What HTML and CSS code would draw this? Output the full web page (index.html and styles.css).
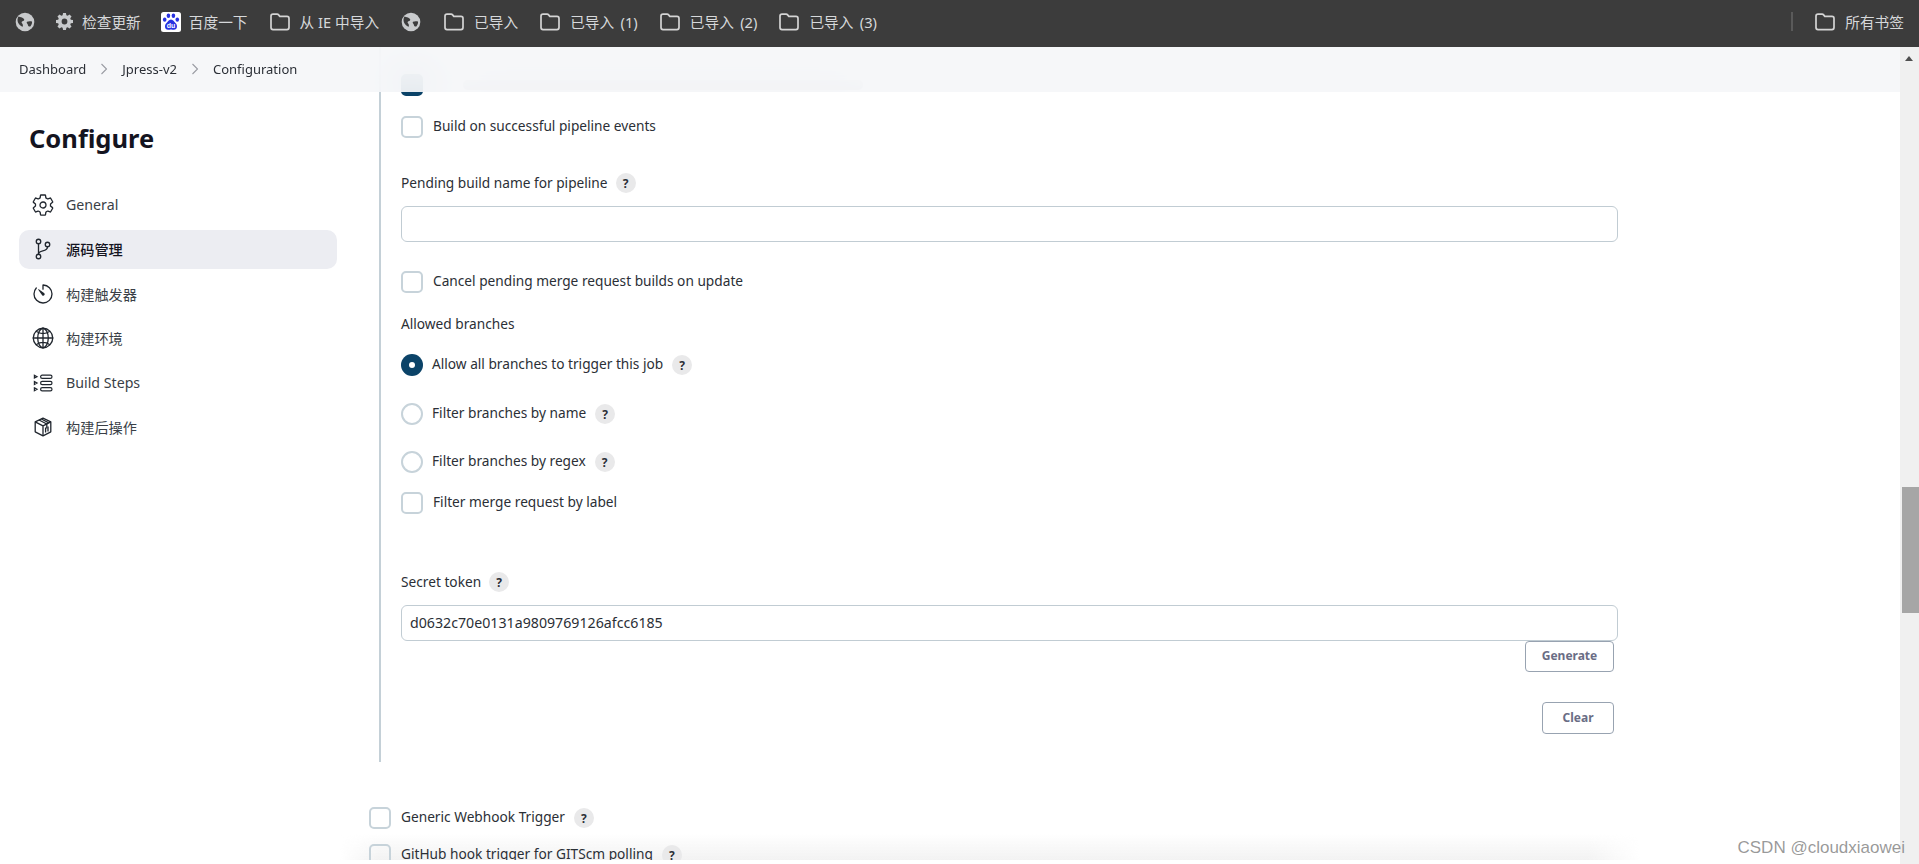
FILE: index.html
```html
<!DOCTYPE html>
<html lang="zh-CN">
<head>
<meta charset="utf-8">
<title>Jpress-v2 Config</title>
<link rel="stylesheet" href="styles.css">
</head>
<body>
<svg class="defs" width="0" height="0" aria-hidden="true">
  <symbol id="folder" viewBox="0 0 20 18"><path d="M1 3.2C1 2 1.8 1.2 3 1.2h4.2c.6 0 1 .2 1.4.7l1.2 1.5h7.2c1.2 0 2 .8 2 2v9.2c0 1.2-.8 2-2 2H3c-1.200 0-2-.8-2-2z" fill="none" stroke="currentColor" stroke-width="1.700"/></symbol>
  <symbol id="earth" viewBox="0 0 20 20"><circle cx="10" cy="10" r="9.300" fill="#c8cacc"/><path d="M3.500 4.500c2 .5 3.500 1 5 2 1.300.9.800 2.300-.5 2.600-1.500.4-1.800 1.500-.8 2.400.8.800.8 2 .6 3.200-1.800-.5-3.800-2-4.800-4.200-.8-2-.6-4.300.5-6zM12 9.800c1.500-.8 3.200-.8 5-.3.300 1.700-.4 3.600-1.700 5-.8.200-1.400.1-2-.6-.6-.8-.3-1.500-1-2.200-.5-.6-.9-1.300-.3-1.900z" fill="#3c3c3c"/></symbol>
</svg>

<header class="toolbar">
  <svg class="tb-icon earth first"><use href="#earth"/></svg>
  <span class="tb-item tb-check">
    <svg class="tb-gear" viewBox="0 0 20 20"><path fill-rule="evenodd" d="M8.300 0h3.400l.5 2.600 1.500.6 2.200-1.500 2.400 2.400-1.500 2.200.6 1.500 2.600.5v3.400l-2.600.5-.6 1.500 1.500 2.200-2.400 2.400-2.200-1.500-1.500.6-.5 2.600H8.300l-.5-2.600-1.500-.6-2.200 1.500-2.400-2.400 1.500-2.200-.6-1.500L0 11.700V8.300l2.600-.5.6-1.500-1.500-2.200 2.400-2.400 2.200 1.500 1.500-.6zM10 6.600a3.400 3.400 0 100 6.800 3.400 3.400 0 000-6.800z" fill="#c8cacc"/></svg>
    <span>检查更新</span>
  </span>
  <span class="tb-item">
    <svg class="tb-baidu" viewBox="0 0 20 20"><rect width="20" height="20" rx="2.500" fill="#fff"/><g fill="#2932e1"><ellipse cx="7.400" cy="3.800" rx="1.800" ry="2.300"/><ellipse cx="12.400" cy="3.800" rx="1.800" ry="2.300"/><ellipse cx="3.700" cy="7.600" rx="1.800" ry="2.200"/><ellipse cx="16.300" cy="7.600" rx="1.800" ry="2.200"/><path d="M10 7.500c-2.200 0-3 2.300-4.700 3.800-2 1.700-1.800 6.500 1.800 6.500 1.200 0 1.800-.3 2.900-.3s1.700.3 2.900.3c3.600 0 3.800-4.800 1.800-6.500C13 9.800 12.200 7.500 10 7.500z"/></g><text class="du" x="10" y="16.200" text-anchor="middle">du</text></svg>
    <span>百度一下</span>
  </span>
  <span class="tb-item"><svg class="tb-folder"><use href="#folder"/></svg><span>从 IE 中导入</span></span>
  <svg class="tb-icon earth"><use href="#earth"/></svg>
  <span class="tb-item"><svg class="tb-folder"><use href="#folder"/></svg><span>已导入</span></span>
  <span class="tb-item tb-num"><svg class="tb-folder"><use href="#folder"/></svg><span>已导入 (1)</span></span>
  <span class="tb-item tb-num"><svg class="tb-folder"><use href="#folder"/></svg><span>已导入 (2)</span></span>
  <span class="tb-item tb-num"><svg class="tb-folder"><use href="#folder"/></svg><span>已导入 (3)</span></span>
  <span class="tb-sep"></span>
  <span class="tb-item tb-all"><svg class="tb-folder"><use href="#folder"/></svg><span>所有书签</span></span>
</header>

<div class="view">
  <div class="pane">
    <nav class="crumbs">
      <span>Dashboard</span>
      <svg class="chev" viewBox="0 0 8 12"><path d="M1.500 1l5 5-5 5" fill="none" stroke="#9a9ca3" stroke-width="1.100"/></svg>
      <span>Jpress-v2</span>
      <svg class="chev" viewBox="0 0 8 12"><path d="M1.500 1l5 5-5 5" fill="none" stroke="#9a9ca3" stroke-width="1.100"/></svg>
      <span>Configuration</span>
    </nav>

    <aside class="side">
      <h1 class="side-title">Configure</h1>
      <ul class="side-list">
        <li class="side-item">
          <svg class="side-icon" viewBox="0 0 512 512"><path class="ln" d="M262.290 192.310a64 64 0 1057.400 57.400 64.130 64.130 0 00-57.400-57.400zM416.390 256a154.340 154.340 0 01-1.530 20.790l45.210 35.460a10.810 10.810 0 012.450 13.750l-42.770 74a10.810 10.810 0 01-13.140 4.590l-44.900-18.080a16.110 16.110 0 00-15.170 1.750A164.480 164.480 0 01325 400.800a15.940 15.940 0 00-8.820 12.140l-6.730 47.890a11.080 11.080 0 01-10.680 9.170h-85.540a11.110 11.110 0 01-10.690-8.870l-6.720-47.820a16.070 16.070 0 00-9-12.220 155.300 155.300 0 01-21.460-12.570 16 16 0 00-15.110-1.710l-44.890 18.070a10.810 10.810 0 01-13.140-4.580l-42.770-74a10.800 10.800 0 012.450-13.750l38.210-30a16.050 16.050 0 006.070-14.080c-.36-4.170-.58-8.330-.58-12.500s.21-8.270.58-12.350a16 16 0 00-6.070-13.940l-38.190-30A10.810 10.810 0 0149.480 186l42.770-74a10.810 10.810 0 0113.140-4.590l44.900 18.080a16.110 16.110 0 0015.170-1.750A164.480 164.480 0 01187 111.200a15.940 15.940 0 008.820-12.140l6.730-47.890A11.080 11.080 0 01213.230 42h85.540a11.110 11.110 0 0110.690 8.870l6.720 47.820a16.070 16.070 0 009 12.220 155.300 155.300 0 0121.460 12.570 16 16 0 0015.110 1.710l44.890-18.070a10.810 10.810 0 0113.140 4.580l42.770 74a10.800 10.800 0 01-2.450 13.750l-38.210 30a16.050 16.050 0 00-6.070 14.080c.33 4.140.55 8.300.55 12.470z"/></svg>
          <span>General</span>
        </li>
        <li class="side-item is-active">
          <svg class="side-icon" viewBox="0 0 512 512"><circle class="ln" cx="160" cy="96" r="48"/><circle class="ln" cx="160" cy="416" r="48"/><path class="ln" d="M160 368V144"/><circle class="ln" cx="352" cy="160" r="48"/><path class="ln" d="M352 208c0 128-192 48-192 160"/></svg>
          <span>源码管理</span>
        </li>
        <li class="side-item">
          <svg class="side-icon" viewBox="0 0 512 512"><path class="ln" d="M112.910 128A191.850 191.850 0 0064 254c-1.180 106.350 85.650 193.800 192 194 106.200.2 192-85.830 192-192 0-104.540-83.550-189.610-187.500-192a4.360 4.360 0 00-4.500 4.370V152"/><path class="fl" d="M233.380 278.630l-79-113a8.130 8.130 0 0111.320-11.320l113 79a32.500 32.500 0 01-37.250 53.260 33.210 33.210 0 01-8.070-7.940z"/></svg>
          <span>构建触发器</span>
        </li>
        <li class="side-item">
          <svg class="side-icon" viewBox="0 0 512 512"><path class="ln" d="M256 48C141.130 48 48 141.130 48 256s93.130 208 208 208 208-93.130 208-208S370.870 48 256 48z"/><path class="ln" d="M256 48c-58.070 0-112.670 93.130-112.670 208S197.930 464 256 464s112.670-93.130 112.670-208S314.070 48 256 48z"/><path class="ln" d="M117.330 117.330c38.240 27.150 86.380 43.340 138.670 43.340s100.430-16.190 138.670-43.340M394.670 394.670c-38.240-27.150-86.380-43.340-138.670-43.340s-100.430 16.190-138.670 43.340M256 48v416M464 256H48"/></svg>
          <span>构建环境</span>
        </li>
        <li class="side-item">
          <svg class="side-icon" viewBox="-2 -2 24 24"><g fill="none" stroke="#20262e" stroke-width="1.200"><rect x="7.600" y="2.100" width="11.400" height="3.200" rx="1.600"/><rect x="7.600" y="8.400" width="11.400" height="3.200" rx="1.600"/><rect x="7.600" y="14.700" width="11.400" height="3.200" rx="1.600"/><path d="M1.400 2.300l2.600 1.400-2.600 1.400zM1.400 8.600L4 10l-2.600 1.400zM1.400 14.900L4 16.300l-2.600 1.400z"/></g></svg>
          <span>Build Steps</span>
        </li>
        <li class="side-item">
          <svg class="side-icon" viewBox="-2 -2 24 24"><g fill="none" stroke="#20262e" stroke-width="1.300" stroke-linejoin="round"><path d="M10 1.200l7.800 3.600v10L10 18.800l-7.800-4v-10z"/><path d="M2.200 4.800L10 8.800l7.800-4M10 8.800v10"/><path d="M6 3l7.800 4v4.600M8.400 2l7.400 3.800"/><path d="M12.600 10.500v5M15 9.400v5"/></g></svg>
          <span>构建后操作</span>
        </li>
      </ul>
    </aside>

    <main class="main">
      <section class="panel">
        <span class="ghost-row" aria-hidden="true"><span class="box is-checked"></span><span class="ghost-text"></span></span>
        <label class="row row-build"><span class="box"></span><span>Build on successful pipeline events</span></label>

        <div class="field-label label-pending"><span>Pending build name for pipeline</span><span class="help">?</span></div>
        <div class="input"></div>

        <label class="row row-cancel"><span class="box"></span><span>Cancel pending merge request builds on update</span></label>

        <div class="field-label label-allowed"><span>Allowed branches</span></div>
        <label class="row radio-row r1"><span class="radio is-on"></span><span>Allow all branches to trigger this job</span><span class="help">?</span></label>
        <label class="row radio-row r2"><span class="radio"></span><span>Filter branches by name</span><span class="help">?</span></label>
        <label class="row radio-row r3"><span class="radio"></span><span>Filter branches by regex</span><span class="help">?</span></label>
        <label class="row row-label"><span class="box"></span><span>Filter merge request by label</span></label>

        <div class="field-label label-secret"><span>Secret token</span><span class="help">?</span></div>
        <div class="input">d0632c70e0131a9809769126afcc6185</div>
        <div class="btn-line"><span class="btn btn-generate">Generate</span></div>
        <div class="btn-line btn-line-clear"><span class="btn btn-clear">Clear</span></div>
      </section>

      <label class="row trigger t1"><span class="box"></span><span>Generic Webhook Trigger</span><span class="help">?</span></label>
      <label class="row trigger t2"><span class="box"></span><span>GitHub hook trigger for GITScm polling</span><span class="help">?</span></label>
    </main>
    <div class="bottom-haze"></div>
  </div>

  <div class="scrollbar">
    <span class="sb-arrow"></span>
    <span class="sb-thumb"></span>
  </div>
  <span class="watermark">CSDN @cloudxiaowei</span>
</div>
</body>
</html>
```
FILE: styles.css
```css
* { box-sizing: border-box; }
html, body { margin: 0; height: 100%; overflow: hidden; }
body {
  display: flex;
  flex-direction: column;
  height: 864px;
  background: #fff;
  color: #2b2f36;
  font-family: "Noto Sans", "Noto Sans CJK SC", sans-serif;
  font-size: 13.700px;
}
.defs { position: absolute; }

/* browser bookmarks bar */
.toolbar {
  flex: 0 0 47px;
  display: flex;
  align-items: center;
  background: #3c3c3c;
  color: #d6d8da;
  font-family: "Noto Sans", "Noto Sans CJK SC", sans-serif;
  font-size: 14.700px;
  padding: 0 15px 4px;
}
.tb-icon { width: 20px; height: 20px; flex: none; }
.earth.first { margin-left: 0; margin-right: 20px; }
.tb-item { display: flex; align-items: center; margin-right: 22px; white-space: nowrap; color: #d6d8da; }
.tb-num { word-spacing: 2.500px; }
.tb-check { margin-left: 1px; margin-right: 20px; }
.tb-gear { width: 17px; height: 17px; margin-right: 9px; }
.tb-baidu { width: 20px; height: 20px; margin-right: 8px; }
.du { font: bold 7px "Liberation Sans", sans-serif; fill: #fff; }
.tb-folder { width: 20px; height: 18px; margin-right: 10px; color: #d4d4d4; }
.earth { margin-right: 23px; color: #c8cacc; }
.tb-sep { width: 2px; height: 19px; background: #5a5a5a; margin-left: auto; margin-right: 22px; }
.tb-all { margin-right: 0; }

/* page */
.view { position: relative; flex: 1; display: flex; min-height: 0; }
.pane { position: relative; flex: 1; display: flex; min-width: 0; overflow: hidden; padding-bottom: 4px; }

.crumbs {
  position: absolute;
  top: 0; left: 0; right: 0;
  height: 45px;
  z-index: 2;
  display: flex;
  align-items: center;
  padding: 0 0 2px 19px;
  font-size: 13px;
  color: #2b2f36;
  background: rgba(245, 246, 248, .9);
  backdrop-filter: blur(20px);
}
.chev { width: 8px; height: 12px; margin: 0 14px; }

.side { flex: 0 0 369px; padding: 76px 0 0 19px; font-size: 14.200px; }
.side-title { margin: 0 0 0 10px; font-size: 25.500px; line-height: 30px; font-weight: 700; color: #14141f; }
.side-list { list-style: none; margin: 32px 0 0; padding: 0; width: 318px; }
.side-item {
  display: flex;
  align-items: center;
  height: 39px;
  margin-bottom: 5.500px;
  padding-left: 12px;
  border-radius: 10px;
  color: #3a3f47;
}
.side-item.is-active { background: #ecedf2; color: #14141f; font-weight: 500; }
.side-icon { width: 24px; height: 24px; margin-right: 11px; flex: none; }
.ln { fill: none; stroke: #20262e; stroke-width: 28; stroke-linecap: round; stroke-linejoin: round; }
.fl { fill: #20262e; }

.main { position: relative; z-index: 1; flex: 1; min-width: 0; overflow: hidden; }
.panel {
  width: 1239px;
  height: 715px;
  margin-left: 10px;
  padding: 27px 0 0 20px;
  border-left: 2px solid #c4d0d7;
}
.row { display: flex; align-items: center; height: 22px; white-space: nowrap; }
.row > .radio + span { padding-bottom: 3px; }
.row > .box + span { padding-bottom: 4px; }
.field-label > span:first-child { padding-bottom: 2px; }
.ghost-row { display: flex; align-items: center; height: 22px; }
.ghost-text { width: 400px; height: 10px; margin-left: 30px; border-radius: 5px; background: #c4c7cc; }
.box {
  flex: none;
  width: 22px; height: 22px;
  margin-right: 10px;
  border: 2px solid #c7d3da;
  border-radius: 5px;
  background: transparent;
}
.box.is-checked { background: #0b4368; border-color: #0b4368; }
.radio {
  flex: none;
  position: relative;
  width: 22px; height: 22px;
  margin-right: 9px;
  border: 2px solid #c7d3da;
  border-radius: 50%;
}
.radio.is-on { border: 0; background: #0b4368; }
.radio.is-on::after {
  content: "";
  position: absolute;
  left: 8px; top: 8px;
  width: 6px; height: 6px;
  border-radius: 50%;
  background: #fff;
}
.help {
  flex: none;
  display: inline-flex;
  align-items: center;
  justify-content: center;
  width: 20px; height: 20px;
  margin-left: 8px;
  border-radius: 50%;
  background: #e9e9ea;
  font-size: 12px;
  font-weight: 700;
  color: #2b2f36;
}
.row .help { margin-left: 9px; }
.field-label { display: flex; align-items: center; height: 20px; white-space: nowrap; }
.input {
  width: 1217px;
  height: 36px;
  margin-top: 13px;
  padding-left: 8px;
  border: 1px solid #c1ccd3;
  border-radius: 6px;
  font-size: 14.200px;
  line-height: 33px;
  color: #2b2f36;
}
.row-build { margin-top: 20px; }
.label-pending { margin-top: 35px; }
.row-cancel { margin-top: 29px; }
.label-allowed { margin-top: 21px; }
.r1 { margin-top: 20px; }
.r2 { margin-top: 27px; }
.r3 { margin-top: 26px; }
.row-label { margin-top: 19px; }
.label-secret { margin-top: 58px; }
.label-secret > span:first-child { padding-bottom: 1px; }

.btn-line { display: flex; justify-content: flex-end; padding-right: 4px; }
.btn-line-clear { margin-top: 30px; }
.btn {
  display: flex;
  align-items: center;
  justify-content: center;
  height: 32px;
  padding-bottom: 2px;
  border: 1px solid #98a3b1;
  border-radius: 4px;
  font-size: 12px;
  font-weight: 700;
  color: #6a6d85;
}
.btn-generate { width: 89px; height: 31px; }
.btn-clear { width: 72px; }

.trigger { margin-left: 0; }
.t1 { margin-top: 45px; }
.t2 { margin-top: 15px; }

.bottom-haze {
  position: absolute;
  left: 340px;
  width: 1300px;
  bottom: 4px;
  height: 26px;
  background: linear-gradient(to bottom, rgba(240,240,240,0), rgba(240,240,240,.85));
  -webkit-mask-image: linear-gradient(to right, transparent, #000 3%, #000 96%, transparent);
  mask-image: linear-gradient(to right, transparent, #000 3%, #000 96%, transparent);
}
.pane::after {
  content: "";
  position: absolute;
  left: 0; right: 0; bottom: 0;
  height: 4px;
  background: #fff;
  z-index: 3;
}

.scrollbar { position: relative; flex: 0 0 19px; background: #f0f0f0; }
.sb-arrow {
  position: absolute;
  top: 9px; left: 5px;
  width: 0; height: 0;
  border-left: 4.500px solid transparent;
  border-right: 4.500px solid transparent;
  border-bottom: 5px solid #4f4f4f;
}
.sb-thumb { position: absolute; top: 440px; left: 2px; right: 0; height: 126px; background: #a6a6a6; }

.watermark {
  position: absolute;
  right: 14px;
  bottom: 6px;
  z-index: 4;
  font-family: "Liberation Sans", Arial, sans-serif;
  font-size: 17px;
  color: rgba(120, 120, 120, .75);
  white-space: nowrap;
}
```
